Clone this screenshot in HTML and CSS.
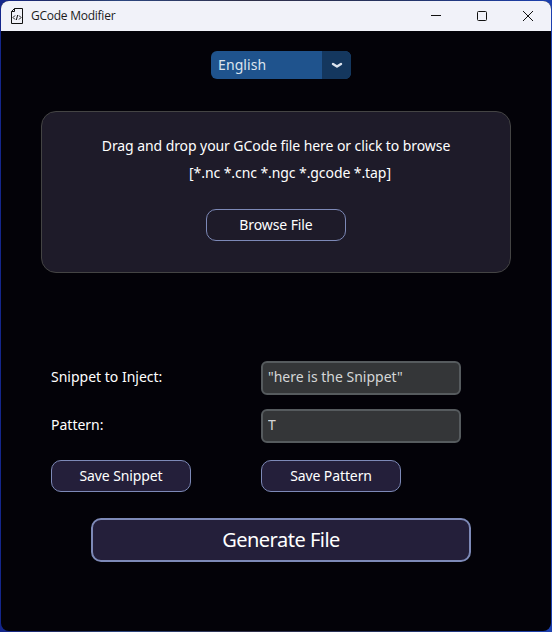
FILE: index.html
```html
<!DOCTYPE html>
<html lang="en">
<head>
<meta charset="utf-8">
<title>GCode Modifier</title>
<link rel="stylesheet" href="styles.css">
</head>
<body>
<div class="window">
  <header class="titlebar">
    <svg class="app-icon" width="14" height="18" viewBox="0 0 14 18" fill="none" stroke="#111" stroke-width="1">
      <path d="M4.5 1.5H12.5V16.5H1.5V4.5L4.5 1.5V4.5H1.5"/>
      <path d="M5 8.5L3 10.5L5 12.5M9 8.5L11 10.5L9 12.5M7.7 8L6.3 13"/>
    </svg>
    <span class="title">GCode Modifier</span>
    <div class="controls">
      <svg width="12" height="12" viewBox="0 0 12 12"><path d="M1 5.5H11"/></svg>
      <svg width="12" height="12" viewBox="0 0 12 12"><rect x="1.5" y="1.5" width="9" height="9" rx="1"/></svg>
      <svg width="12" height="12" viewBox="0 0 12 12"><path d="M1 1L11 11M11 1L1 11"/></svg>
    </div>
  </header>
  <main class="content">
    <div class="language">
      <span class="language-value">English</span>
      <span class="language-arrow"><svg width="12" height="8" viewBox="0 0 12 8"><path d="M2 3L6 5.6L10 3"/></svg></span>
    </div>
    <section class="dropzone">
      <p class="drop-text">Drag and drop your GCode file here or click to browse</p>
      <p class="drop-types">[*.nc *.cnc *.ngc *.gcode *.tap]</p>
      <button class="button browse">Browse File</button>
    </section>
    <section class="form">
      <label for="snippet">Snippet to Inject:</label>
      <input id="snippet" type="text" value="&quot;here is the Snippet&quot;">
      <label for="pattern">Pattern:</label>
      <input id="pattern" type="text" value="T">
      <button class="button">Save Snippet</button>
      <button class="button">Save Pattern</button>
    </section>
    <button class="button generate">Generate File</button>
  </main>
</div>
</body>
</html>
```
FILE: styles.css
```css
* { box-sizing: border-box; }
body {
  margin: 0;
  height: 632px;
  padding: 1px;
  overflow: hidden;
  background: linear-gradient(90deg, #14268c 0, #26305c 12%, #2c4680 22%, #30304a 45%, #26335f 70%, #1c40b0 100%);
  font-family: "Noto Sans", sans-serif;
  font-size: 14px;
  color: #fff;
}
.window {
  height: 630px;
  display: flex;
  flex-direction: column;
  border-radius: 8px;
  overflow: hidden;
  background: #030208;
}
.titlebar {
  height: 30px;
  flex: none;
  display: flex;
  align-items: center;
  padding: 0 17px 0 9px;
  background: #f1f2f9;
  color: #1b1b1b;
}
.title {
  margin-left: 7px;
  font-family: "Open Sans", sans-serif;
  font-size: 12px;
  line-height: 18px;
  letter-spacing: -0.25px;
}
.controls { margin-left: auto; display: flex; gap: 34px; }
.controls svg { fill: none; stroke: #111; stroke-width: 1; }
.content { display: flex; flex-direction: column; padding: 20px 40px 0; }
.language {
  width: 140px;
  height: 28px;
  display: flex;
  margin-left: 170px;
  border-radius: 6px;
  overflow: hidden;
  background: #1f538d;
}
.language-value { width: 111px; padding-left: 7px; line-height: 28px; color: #dce4ee; letter-spacing: 0.1px; }
.language-arrow { flex: 1; display: flex; align-items: center; justify-content: center; background: #14375e; }
.language-arrow svg { fill: none; stroke: #dce4ee; stroke-width: 2.4; stroke-linecap: round; stroke-linejoin: round; }
.dropzone {
  height: 162px;
  margin-top: 32px;
  display: flex;
  flex-direction: column;
  align-items: center;
  border: 1px solid #444;
  border-radius: 15px;
  padding-top: 20px;
  background: #1e1b29;
}
.dropzone p { margin: 0; line-height: 27px; white-space: nowrap; letter-spacing: -0.08px; }
.drop-types { padding-left: 28px; }
.button {
  width: 140px;
  height: 32px;
  padding: 0 0 2px;
  border: 1px solid #7d89b7;
  border-radius: 10px;
  background: #241f3a;
  color: #fff;
  font: inherit;
  letter-spacing: -0.1px;
}
.browse { margin-top: 23px; background: #1e1b29; }
.form {
  display: grid;
  grid-template-columns: 210px 200px;
  grid-template-rows: 34px 34px 32px;
  row-gap: 14px;
  align-items: center;
  margin: 88px 0 0 10px;
}
.form label { padding-bottom: 3px; }
.form .button { margin-top: 6px; }
.form input {
  width: 200px;
  height: 34px;
  padding: 0 5px 3px;
  border: 2px solid #565b5e;
  border-radius: 6px;
  background: #343638;
  color: #d4d6d7;
  font: inherit;
  outline: none;
}
.generate {
  width: 380px;
  height: 44px;
  margin: 29px 0 0 50px;
  border-width: 2px;
  font-size: 20px;
  letter-spacing: -0.5px;
}
```
